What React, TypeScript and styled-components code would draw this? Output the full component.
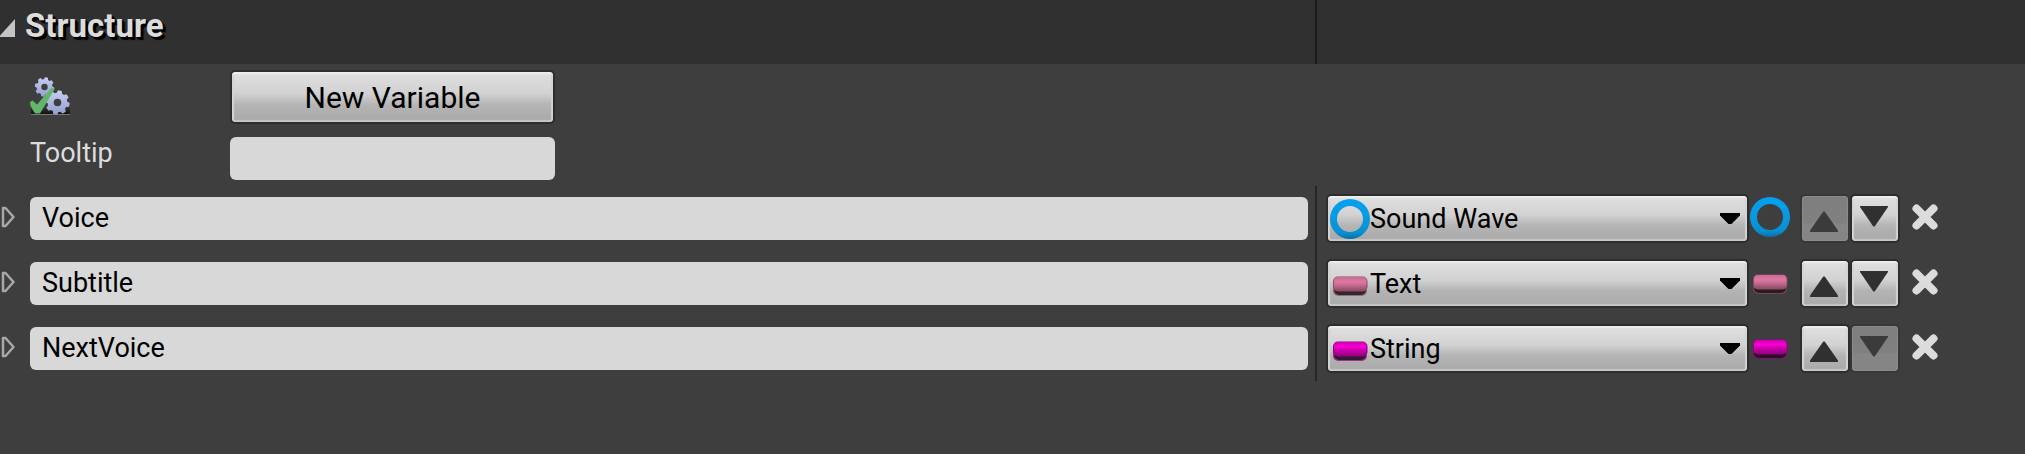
import React, { useState } from "react";
import styled, { createGlobalStyle, css } from "styled-components";

const GlobalStyle = createGlobalStyle`
  *, *::before, *::after { box-sizing: border-box; }
  body {
    margin: 0;
    background: #3e3e3e;
    color: #dcdcdc;
    font: 27px/32px Roboto, "Liberation Sans", sans-serif;
  }
  button, input, select { font: inherit; margin: 0; }
`;

const SPLIT = "minmax(0, 1fr) 710px";

const Panel = styled.main`
  min-width: 1100px;
`;

const Header = styled.header`
  display: grid;
  grid-template-columns: ${SPLIT};
  height: 64px;
  background: #303030;
`;

const HeaderTitle = styled.button`
  display: flex;
  align-items: flex-start;
  gap: 10px;
  padding: 9px 0 0;
  border: 0;
  background: none;
  color: #dcdcdc;
  text-align: left;

  svg { margin-top: 10px; }
`;

const Title = styled.span`
  font-size: 33px;
  line-height: 34px;
  font-weight: 700;
  text-shadow: 1px 1px 0 #000, 2px 2px 0 #000, 3px 3px 1px #000;
`;

const HeaderValue = styled.div`
  border-left: 2px solid #1c1c1c;
`;

const Summary = styled.section`
  display: grid;
  grid-template-columns: 200px 325px;
  row-gap: 13px;
  align-items: start;
  padding: 6px 0 6px 30px;

  > svg { margin-top: 6px; }
`;

const raised = css`
  border: 2px solid #2d2d2d;
  border-radius: 5px;
  background: linear-gradient(#e0e0e0 0%, #d2d2d2 42%, #b4b4b4 66%, #a9a9a9 100%) padding-box;
  box-shadow: inset 0 2px 1px #ededed, inset 2px 0 1px #d2d2d2,
    inset -2px 0 1px #d2d2d2, inset 0 -2px 1px #c6c6c6;
`;

const PushButton = styled.button`
  ${raised}
  height: 54px;
  padding: 1px 0 0;
  color: #000;
  font-size: 30px;
`;

const TextField = styled.input`
  width: 100%;
  height: 43px;
  padding: 0 12px 2px;
  border: 0;
  border-radius: 6px;
  background: #d8d8d8;
  color: #000;
`;

const VariableList = styled.ul`
  margin: 0;
  padding: 0;
  list-style: none;
`;

const VariableRow = styled.li`
  display: grid;
  grid-template-columns: ${SPLIT};
  height: 65px;
`;

const NameCell = styled.div`
  display: flex;
  align-items: center;
  padding-right: 7px;
`;

const IconButton = styled.button`
  display: flex;
  flex: none;
  margin-bottom: 3px;
  padding: 0;
  border: 0;
  background: none;
`;

const Expander = styled(IconButton)`
  width: 30px;
`;

const TypeCell = styled.div`
  display: flex;
  align-items: center;
  padding-left: 9px;
  border-left: 2px solid #262626;
`;

const Combo = styled.div`
  ${raised}
  display: grid;
  grid-template-columns: 40px 1fr 20px;
  align-items: center;
  width: 423px;
  height: 49px;
  padding: 0 7px 0 2px;

  > svg { grid-row: 1; grid-column: 1; pointer-events: none; z-index: 1; }
  > svg:last-of-type { grid-column: 3; }
`;

const TypeSelect = styled.select`
  grid-area: 1 / 1 / 2 / 4;
  height: 45px;
  padding: 0 24px 0 40px;
  border: 0;
  appearance: none;
  background: none;
  color: #000;
`;

const ContainerButton = styled(IconButton)`
  margin-left: 1px;
`;

const MoveButtons = styled.div`
  display: flex;
  margin: 0 12px 0 10px;
`;

const MoveButton = styled.button<{ $down?: boolean }>`
  ${raised}
  display: flex;
  justify-content: center;
  width: 50px;
  height: 49px;
  padding: ${(p) => (p.$down ? "10px" : "15px")} 2px 0 0;
  color: #303030;

  &:disabled {
    border-color: #373737;
    background: linear-gradient(#7e7e7e, #808080 60%, #868686 62%, #848484) padding-box;
    box-shadow: inset 0 0 1px 1px #8c8c8c;
    color: #3b3b3b;
  }
`;

type Kind = "object" | "text" | "string";

const PILL: Record<"text" | "string", [string, string, string]> = {
  text: ["#c96c93", "#dd78a2", "#8a4a64"],
  string: ["#d000b0", "#fa00d4", "#94007f"],
};

function PinIcon({ kind, id }: { kind: Kind; id: string }) {
  if (kind === "object") {
    return (
      <svg width="40" height="40" viewBox="0 0 40 40" aria-hidden="true">
        <defs>
          <linearGradient id={id} x1="0" y1="0" x2="0" y2="1">
            <stop offset="0" stopColor="#00a2ee" />
            <stop offset="0.5" stopColor="#0a98e0" />
            <stop offset="0.85" stopColor="#088fd2" />
            <stop offset="1" stopColor="#0a6ea4" />
          </linearGradient>
        </defs>
        <path
          fill={`url(#${id})`}
          fillRule="evenodd"
          d="M20 0a20 20 0 1 0 0 40a20 20 0 1 0 0-40zM20 7a13 13 0 1 1 0 26a13 13 0 1 1 0-26z"
        />
      </svg>
    );
  }
  const [top, mid, low] = PILL[kind];
  return (
    <svg width="40" height="40" viewBox="0 0 40 40" aria-hidden="true">
      <defs>
        <linearGradient id={id} x1="0" y1="0" x2="0" y2="1">
          <stop offset="0" stopColor={top} />
          <stop offset="0.35" stopColor={mid} />
          <stop offset="0.55" stopColor={top} />
          <stop offset="1" stopColor={low} />
        </linearGradient>
      </defs>
      <rect x="3" y="18" width="34" height="14" rx="5" fill={low} opacity="0.7" />
      <rect x="4" y="18" width="32" height="13" rx="5" fill="#101010" opacity="0.75" />
      <rect x="3" y="12.500" width="34.500" height="15" rx="5" fill={low} />
      <rect x="4" y="13" width="32.500" height="14" rx="4" fill={`url(#${id})`} />
    </svg>
  );
}

function gearPath(cx: number, cy: number, outer: number, inner: number, hole: number) {
  const teeth = 8;
  const step = (Math.PI * 2) / teeth;
  const pts: string[] = [];
  for (let i = 0; i < teeth; i++) {
    const a = i * step + 0.2;
    const corners: [number, number][] = [
      [-0.36, inner],
      [-0.2, outer],
      [0.2, outer],
      [0.36, inner],
    ];
    for (const [o, r] of corners) {
      const t = a + o * step;
      pts.push(`${(cx + Math.sin(t) * r).toFixed(2)} ${(cy - Math.cos(t) * r).toFixed(2)}`);
    }
  }
  return `M${pts.join("L")}ZM${cx - hole} ${cy}a${hole} ${hole} 0 1 0 ${hole * 2} 0a${hole} ${hole} 0 1 0 ${-hole * 2} 0z`;
}

function StatusIcon() {
  return (
    <svg width="40" height="40" viewBox="0 0 40 40" role="img" aria-label="Structure is valid">
      <defs>
        <linearGradient id="gear" x1="0" y1="0" x2="0" y2="1">
          <stop offset="0" stopColor="#c6cff0" />
          <stop offset="1" stopColor="#929ecd" />
        </linearGradient>
        <linearGradient id="ground" x1="0" y1="0" x2="0" y2="1">
          <stop offset="0" stopColor="#101010" stopOpacity="0" />
          <stop offset="1" stopColor="#101010" />
        </linearGradient>
      </defs>
      <rect x="1" y="30" width="39" height="8" fill="url(#ground)" />
      <rect x="1" y="38" width="39" height="1" fill="#777" />
      <path d={gearPath(14.5, 11, 9.8, 7.8, 3.2)} fill="url(#gear)" fillRule="evenodd" />
      <path d={gearPath(27.5, 26.5, 12.3, 9.8, 3.8)} fill="url(#gear)" fillRule="evenodd" />
      <path d="M0 26L2.500 24.500L7 28.500L21.500 12L25 12.500L10 37.500H5L0.500 30Z" fill="#62b66c" />
    </svg>
  );
}

function CollapseIcon() {
  return (
    <svg width="15" height="18" viewBox="0 0 15 18" aria-hidden="true">
      <path d="M15 0V18H0V16.500Z" fill="#c4c4c4" />
    </svg>
  );
}

function ExpandIcon() {
  return (
    <svg width="16" height="22" viewBox="0 0 16 22" aria-hidden="true">
      <path
        d="M3 2H5.500L13.500 11L5.500 20H3Z"
        fill="none"
        stroke="#a8a8a8"
        strokeWidth="2.500"
        strokeLinejoin="round"
      />
    </svg>
  );
}

function ChevronIcon() {
  return (
    <svg width="20" height="11" viewBox="0 0 20 11" aria-hidden="true">
      <path d="M0 0H20V2.500L11.500 11H8.500L0 2.500Z" fill="#000" />
    </svg>
  );
}

function ArrowIcon({ down }: { down?: boolean }) {
  return (
    <svg width="28" height="21" viewBox="0 0 28 21" aria-hidden="true">
      <path
        d={
          down
            ? "M0 0H28V1L14.700 20.500H13.300L0 1Z"
            : "M0 21H28V19.500L14.700 0.500H13.300L0 19.500Z"
        }
        fill="currentColor"
      />
    </svg>
  );
}

function CrossIcon() {
  return (
    <svg width="26" height="26" viewBox="0 0 26 26" aria-hidden="true">
      <path
        d="M4.500 4.500L21.500 21.500M21.500 4.500L4.500 21.500"
        stroke="#dcdcdc"
        strokeWidth="8"
        strokeLinecap="round"
      />
    </svg>
  );
}

const VARIABLES: { name: string; type: string; kind: Kind }[] = [
  { name: "Voice", type: "Sound Wave", kind: "object" },
  { name: "Subtitle", type: "Text", kind: "text" },
  { name: "NextVoice", type: "String", kind: "string" },
];

const TYPES: { type: string; kind: Kind }[] = VARIABLES.map(({ type, kind }) => ({ type, kind }));

function Variable({ index }: { index: number }) {
  const initial = VARIABLES[index];
  const [name, setName] = useState(initial.name);
  const [type, setType] = useState(initial.type);
  const kind = TYPES.find((t) => t.type === type)!.kind;

  return (
    <VariableRow>
      <NameCell>
        <Expander type="button" aria-label={`Expand ${name}`} aria-expanded={false}>
          <ExpandIcon />
        </Expander>
        <TextField aria-label="Variable name" value={name} onChange={(e) => setName(e.target.value)} />
      </NameCell>
      <TypeCell>
        <Combo>
          <TypeSelect aria-label={`${name} type`} value={type} onChange={(e) => setType(e.target.value)}>
            {TYPES.map((t) => (
              <option key={t.type}>{t.type}</option>
            ))}
          </TypeSelect>
          <PinIcon kind={kind} id={`type-${index}`} />
          <ChevronIcon />
        </Combo>
        <ContainerButton type="button" aria-label={`${name} container type`}>
          <PinIcon kind={kind} id={`container-${index}`} />
        </ContainerButton>
        <MoveButtons>
          <MoveButton type="button" aria-label={`Move ${name} up`} disabled={index === 0}>
            <ArrowIcon />
          </MoveButton>
          <MoveButton
            type="button"
            $down
            aria-label={`Move ${name} down`}
            disabled={index === VARIABLES.length - 1}
          >
            <ArrowIcon down />
          </MoveButton>
        </MoveButtons>
        <IconButton type="button" aria-label={`Remove ${name}`}>
          <CrossIcon />
        </IconButton>
      </TypeCell>
    </VariableRow>
  );
}

export default function App() {
  return (
    <>
      <GlobalStyle />
      <Panel>
        <Header>
          <HeaderTitle type="button" aria-expanded>
            <CollapseIcon />
            <Title>Structure</Title>
          </HeaderTitle>
          <HeaderValue />
        </Header>
        <Summary>
          <StatusIcon />
          <PushButton type="button">New Variable</PushButton>
          <label htmlFor="tooltip">Tooltip</label>
          <TextField id="tooltip" />
        </Summary>
        <VariableList>
          {VARIABLES.map((v, i) => (
            <Variable key={v.name} index={i} />
          ))}
        </VariableList>
      </Panel>
    </>
  );
}
